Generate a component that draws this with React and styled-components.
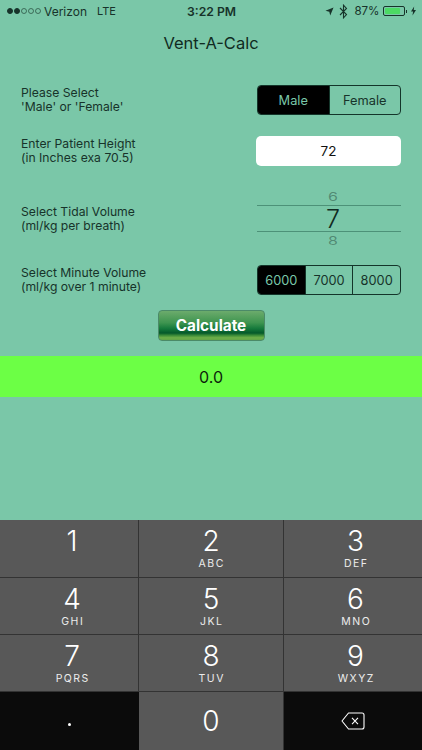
import React from "react";
import styled, { createGlobalStyle } from "styled-components";

const GlobalStyle = createGlobalStyle`
  html, body { margin: 0; padding: 0; }
  body { font-family: "Inter", "Liberation Sans", sans-serif; background: #7ac7a8; }
`;

const KEYS = [
  ["1", ""], ["2", "ABC"], ["3", "DEF"],
  ["4", "GHI"], ["5", "JKL"], ["6", "MNO"],
  ["7", "PQRS"], ["8", "TUV"], ["9", "WXYZ"],
];

const App = () => {
  return (
    <>
      <GlobalStyle />
      <Page>
        <StatusBar>
          <StatusLeft>
            <Dots>
              {[1, 1, 0, 0, 0].map((on, i) => <Dot key={i} $on={on} />)}
            </Dots>
            <span>Verizon</span>
            <Lte>LTE</Lte>
          </StatusLeft>
          <Clock>3:22 PM</Clock>
          <StatusRight>
            <svg width="9" height="9" viewBox="0 0 10 10">
              <path d="M9.5 .5 L.5 4.2 L4.8 5.2 L5.8 9.5 Z" fill="#17332a" />
            </svg>
            <Bluetooth width="9" height="15" viewBox="0 0 9 15">
              <path d="M1 4 L7.5 10.5 L4.5 13.8 V1.2 L7.5 4.5 L1 11" fill="none" stroke="#17332a" strokeWidth="1.1" />
            </Bluetooth>
            <Percent>87%</Percent>
            <Battery><BatteryFill /></Battery>
            <BatteryTip />
            <svg width="5" height="10" viewBox="0 0 6 11">
              <path d="M3.8 0 L0 6.2 H2.5 L1.8 11 L6 4.4 H3.3 Z" fill="#17332a" />
            </svg>
          </StatusRight>
        </StatusBar>

        <Title>Vent-A-Calc</Title>

        <Form>
          <Row $height={30}>
            <Label>Please Select<br />'Male' or 'Female'</Label>
            <Segmented>
              <Segment $active>Male</Segment>
              <Segment>Female</Segment>
            </Segmented>
          </Row>
          <Row $height={30} $top={21}>
            <Label>Enter Patient Height<br />(in Inches exa 70.5)</Label>
            <HeightField>72</HeightField>
          </Row>
          <Row $height={56} $top={25}>
            <Label>Select Tidal Volume<br />(ml/kg per breath)</Label>
            <Picker>
              <PickerEdge $top><span>6</span></PickerEdge>
              <PickerValue>7</PickerValue>
              <PickerEdge><span>8</span></PickerEdge>
            </Picker>
          </Row>
          <Row $height={30} $top={18}>
            <Label>Select Minute Volume<br />(ml/kg over 1 minute)</Label>
            <Segmented>
              <Segment $active>6000</Segment>
              <Segment>7000</Segment>
              <Segment>8000</Segment>
            </Segmented>
          </Row>
        </Form>

        <CalculateButton>Calculate</CalculateButton>
        <ResultBar>0.0</ResultBar>

        <Keypad>
          {KEYS.map(([digit, letters]) => (
            <Key key={digit}>
              <Digit>{digit}</Digit>
              <Letters>{letters}</Letters>
            </Key>
          ))}
          <DarkKey><Point /></DarkKey>
          <ZeroKey>0</ZeroKey>
          <DarkKey>
            <Backspace width="24" height="18" viewBox="0 0 24 18">
              <path d="M7.5 1 H21 a2 2 0 0 1 2 2 V15 a2 2 0 0 1 -2 2 H7.5 L1 9 Z" fill="none" stroke="#fff" strokeWidth="1.1" strokeLinejoin="round" />
              <path d="M11 5.8 L17 12.2 M17 5.8 L11 12.2" fill="none" stroke="#fff" strokeWidth="1.1" />
            </Backspace>
          </DarkKey>
        </Keypad>
      </Page>
    </>
  );
};

export default App;

const Page = styled.div`
  width: 422px;
  height: 750px;
  overflow: hidden;
  display: flex;
  flex-direction: column;
  background: #7ac7a8;
  color: #17332a;
`;

const StatusBar = styled.div`
  height: 22px;
  padding: 0 6px 0 7px;
  display: grid;
  grid-template-columns: 1fr auto 1fr;
  align-items: center;
  font-size: 12px;
`;

const StatusLeft = styled.div`
  display: flex;
  align-items: center;
`;

const Dots = styled.div`
  display: flex;
  gap: 1px;
  margin-right: 3px;
`;

const Dot = styled.i`
  box-sizing: border-box;
  width: 6px;
  height: 6px;
  border-radius: 50%;
  border: 0.5px solid #17332a;
  background: ${(p) => (p.$on ? "#17332a" : "transparent")};
  opacity: ${(p) => (p.$on ? 1 : 0.6)};
`;

const Lte = styled.span`
  margin-left: 10px;
  font-size: 11px;
`;

const Clock = styled.div`
  font-weight: 600;
  font-size: 12.2px;
`;

const StatusRight = styled.div`
  display: flex;
  align-items: center;
  justify-content: flex-end;
`;

const Bluetooth = styled.svg`
  margin-left: 5px;
`;

const Percent = styled.span`
  margin: 0 3px 0 6px;
  font-size: 11.6px;
`;

const Battery = styled.div`
  box-sizing: border-box;
  width: 22px;
  height: 10px;
  padding: 1px;
  border: 0.5px solid #17332a;
  border-radius: 2px;
`;

const BatteryFill = styled.div`
  width: 88%;
  height: 100%;
  background: #4cd964;
  border-radius: 1px;
`;

const BatteryTip = styled.div`
  width: 1.5px;
  height: 3px;
  margin: 0 4px 0 1px;
  background: #17332a;
`;

const Title = styled.div`
  height: 42px;
  line-height: 42px;
  text-align: center;
  font-size: 16.5px;
  color: #102a21;
`;

const Form = styled.div`
  padding: 21px 21px 0;
`;

const Row = styled.div`
  height: ${(p) => p.$height}px;
  margin-top: ${(p) => p.$top || 0}px;
  display: flex;
  align-items: center;
  justify-content: space-between;
`;

const Label = styled.div`
  font-size: 12.2px;
  line-height: 14px;
  color: #17332a;
`;

const Segmented = styled.div`
  width: 144px;
  height: 30px;
  box-sizing: border-box;
  display: flex;
  border: 1px solid #14352a;
  border-radius: 4px;
  overflow: hidden;
`;

const Segment = styled.div`
  flex: 1;
  display: flex;
  align-items: center;
  justify-content: center;
  font-size: 12.8px;
  color: ${(p) => (p.$active ? "#7ac7a8" : "#17332a")};
  background: ${(p) => (p.$active ? "#000" : "transparent")};
  border-left: 1px solid #14352a;
  &:first-child { border-left: 0; }
`;

const HeightField = styled.div`
  width: 145px;
  height: 30px;
  display: flex;
  align-items: center;
  justify-content: center;
  background: #fff;
  border-radius: 5px;
  font-size: 13.5px;
  color: #111;
`;

const Picker = styled.div`
  width: 144px;
  height: 56px;
  display: flex;
  flex-direction: column;
  align-items: center;
`;

const PickerEdge = styled.div`
  height: 14px;
  width: 100%;
  padding-left: 8px;
  box-sizing: border-box;
  overflow: hidden;
  display: flex;
  justify-content: center;
  align-items: ${(p) => (p.$top ? "flex-end" : "flex-start")};
  font-size: 16px;
  line-height: 12px;
  color: rgba(23, 51, 42, 0.42);
  span {
    display: block;
    transform: scaleY(0.7);
    margin: ${(p) => (p.$top ? "0 0 2px" : "3px 0 0")};
  }
`;

const PickerValue = styled.div`
  width: 100%;
  height: 27px;
  box-sizing: border-box;
  padding-left: 8px;
  display: flex;
  align-items: center;
  justify-content: center;
  font-size: 25px;
  font-weight: 300;
  color: #102a21;
  border-top: 1px solid rgba(40, 100, 80, 0.55);
  border-bottom: 1px solid rgba(40, 100, 80, 0.55);
`;

const CalculateButton = styled.div`
  align-self: center;
  width: 107px;
  height: 31px;
  box-sizing: border-box;
  margin-top: 15px;
  display: flex;
  align-items: center;
  justify-content: center;
  border: 1px solid #4b8a68;
  border-radius: 4px;
  font-size: 15.3px;
  font-weight: 700;
  color: #fff;
  background: linear-gradient(#6cab6c 0%, #3f9550 40%, #167a3c 60%, #04592a 76%, #3a8a38 84%, #6dae48 92%, #62a548 100%);
`;

const ResultBar = styled.div`
  height: 41px;
  margin-top: 15px;
  display: flex;
  align-items: center;
  justify-content: center;
  background: #6cff45;
  font-size: 16px;
  color: #0c1f0c;
`;

const Keypad = styled.div`
  margin-top: auto;
  height: 230px;
  display: grid;
  grid-template-columns: 139px 145px 138px;
  grid-template-rows: 58px 57px 57px 58px;
  background: #3a3a3a;
`;

const Key = styled.div`
  background: #585858;
  box-sizing: border-box;
  border-right: 1px solid #333;
  border-bottom: 1px solid #333;
  display: flex;
  flex-direction: column;
  align-items: center;
  color: #fff;
  &:nth-child(3n + 1) { padding-left: 6px; }
  &:nth-child(3n) { border-right: 0; padding-left: 5px; }
`;

const Digit = styled.div`
  height: 37px;
  line-height: 42px;
  font-size: 28px;
  font-weight: 300;
`;

const Letters = styled.div`
  font-size: 10.5px;
  line-height: 13px;
  letter-spacing: 1.5px;
  margin-right: -1.5px;
  color: #ececec;
`;

const DarkKey = styled.div`
  background: #0b0b0b;
  display: flex;
  align-items: center;
  justify-content: center;
  color: #fff;
`;

const Point = styled.i`
  width: 3px;
  height: 3px;
  margin-top: 7px;
  border-radius: 50%;
  background: #fff;
`;

const Backspace = styled.svg`
  margin-right: 1px;
  margin-top: -1px;
`;

const ZeroKey = styled.div`
  background: #585858;
  box-sizing: border-box;
  border-right: 1px solid #333;
  display: flex;
  align-items: center;
  justify-content: center;
  font-size: 28px;
  font-weight: 300;
  color: #fff;
`;
